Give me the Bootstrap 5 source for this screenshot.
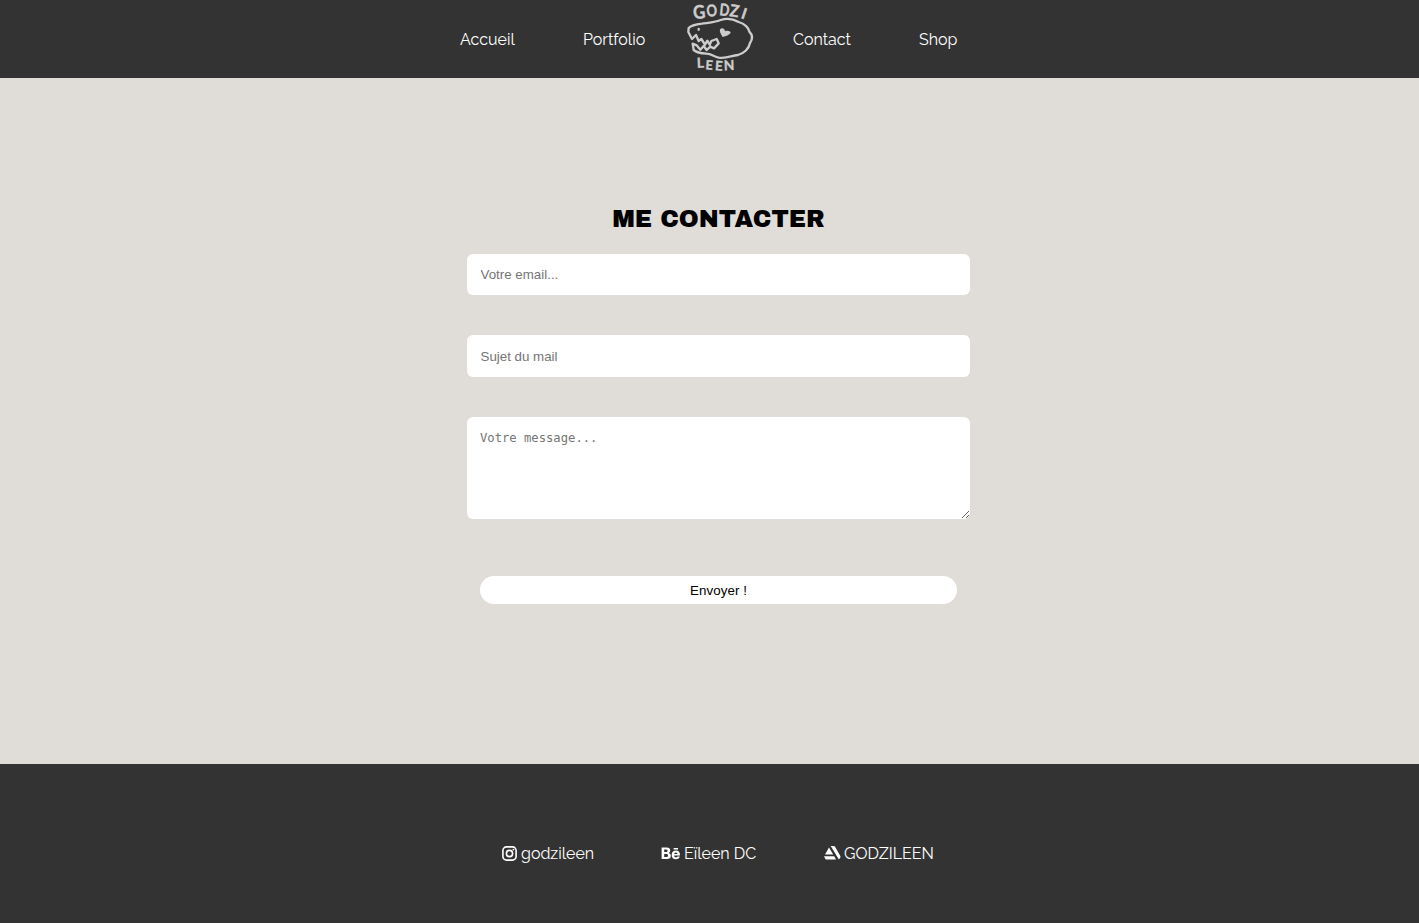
<!DOCTYPE html>
<html lang="fr">
<head>
<meta charset="utf-8">
<meta name="viewport" content="width=device-width, initial-scale=1">
<title>Godzileen - Contact</title>
<link href="https://cdn.jsdelivr.net/npm/bootstrap@5.3.0/dist/css/bootstrap.min.css" rel="stylesheet">
<style>
  body { background: #e0ddd8; font-family: Raleway, Lato, sans-serif; font-size: 16px; }
  .bar-dark { background: #333; }
  .site-header { height: 78px; }
  .site-header a, .site-footer a { color: #fff; text-decoration: none; white-space: nowrap; }
  .main-menu { width: 498px; margin-left: 460px; }
  .main-menu a { line-height: 24px; }
  .main-menu a:not(.logo-link) { padding-top: 2px; }
  .w-accueil { width: 55px; margin-right: 68px; }
  .w-portfolio { width: 62px; margin-right: 35px; }
  .w-contact { width: 58px; margin: 0 68px 0 33px; }
  .w-shop { width: 38px; }
  .logo-link { width: 80px; height: 78px; }
  .contact-area { height: 686px; padding: 124px 0 0 467px; }
  .contact-form { width: 503px; }
  .contact-title { font: 400 24px/34px "Archivo Black", Inter, sans-serif; color: #000; margin-bottom: 18px; }
  .contact-form .form-control { border: 0; border-radius: 6px; padding: 0 13px; color: #000; font: 13.33px "Liberation Sans", sans-serif; }
  .contact-form .form-control::placeholder { color: #757575; }
  .contact-form input.form-control { height: 41px; margin-bottom: 40px; padding-left: 13.5px; }
  .contact-form input.subject { height: 42px; }
  .contact-form textarea.form-control { height: 102px; min-height: 0; padding: 13px; font: 12.2px/16px "DejaVu Sans Mono", monospace; }
  .send { width: 477px; height: 28px; margin: 57px 13px 0; padding: 1px 0 0; border: 0; border-radius: 14px; background: #fff; color: #000; font: 13.33px/27px "Liberation Sans", sans-serif; letter-spacing: .1px; }
  .site-footer { height: 159px; padding: 77px 0 0 502px; }
  .site-footer a { line-height: 24px; height: 24px; }
  .site-footer span { padding-top: 2px; }
  .s-insta { width: 92px; margin-right: 67px; }
  .s-be { width: 96px; margin-right: 67px; }
  .s-art { width: 111px; }
</style>
</head>
<body>
<header class="site-header bar-dark">
  <nav class="main-menu d-flex align-items-center h-100">
    <a class="w-accueil" href="#">Accueil</a>
    <a class="w-portfolio" href="#">Portfolio</a>
    <a class="logo-link flex-shrink-0" href="#" aria-label="Godzileen">
      <svg class="d-block" width="80" height="80" viewBox="0 0 240 240" fill="none" stroke="#ccc" stroke-width="7" stroke-linecap="round" stroke-linejoin="round">
        <path d="M26 84C34 75 50 73 66 71C86 68 110 66 122 60C140 54 158 56 176 66C194 71 207 84 208 95C220 107 217 119 210 129C207 146 192 160 174 165C153 167 140 177 116 173C102 170 94 161 79 161C64 160 48 156 41 150L38 131L50 136L61 149L71 138L80 150L91 140L102 145L116 130L110 117L94 123L89 134L82 122L75 134L64 117L56 123L48 105L36 117L25 96Z"/>
        <path d="M56 87V89"/>
        <path d="M120 88C126 82 134 85 135 94C142 91 152 93 152 99C147 105 139 108 128 111C122 102 118 95 120 88Z" fill="#ccc" stroke="none"/>
        <g fill="#ccc" stroke-width="1.2" font-family="Lato, sans-serif" font-weight="700">
          <text font-size="56" transform="translate(41 58) rotate(-6) scale(.9 1)">G</text>
          <text font-size="49" transform="translate(81 50) rotate(-5) scale(.8 1)">O</text>
          <text font-size="50" transform="translate(117 46) rotate(6) scale(.78 1)">D</text>
          <text font-size="50" transform="translate(147 48) rotate(9) scale(.92 1)">Z</text>
          <text font-size="46" transform="translate(181 54) rotate(19)">I</text>
          <text font-size="41" transform="translate(51 203) rotate(-2)">L</text>
          <text font-size="38" transform="translate(76 208) rotate(4)">E</text>
          <text font-size="40" transform="translate(104 211) rotate(4)">E</text>
          <text font-size="41" transform="translate(132 211) rotate(-2)">N</text>
        </g>
      </svg>
    </a>
    <a class="w-contact" href="#">Contact</a>
    <a class="w-shop" href="#">Shop</a>
  </nav>
</header>

<main class="contact-area">
  <form class="contact-form">
    <h1 class="contact-title text-center">ME CONTACTER</h1>
    <input type="email" class="form-control" placeholder="Votre email...">
    <input type="text" class="form-control subject" placeholder="Sujet du mail">
    <textarea class="form-control" placeholder="Votre message..."></textarea>
    <button type="button" class="send d-block text-center">Envoyer !</button>
  </form>
</main>

<footer class="site-footer bar-dark d-flex">
  <a class="s-insta d-flex align-items-center" href="#">
    <svg class="me-1 flex-shrink-0" width="15" height="15" viewBox="0 0 15 15" fill="none" stroke="#fff" stroke-width="1.6"><rect x=".9" y=".9" width="13.2" height="13.2" rx="3.6"/><circle cx="7.5" cy="7.5" r="3.1"/><circle cx="11.4" cy="3.6" r=".9" fill="#fff" stroke="none"/></svg>
    <span>godzileen</span>
  </a>
  <a class="s-be d-flex align-items-center" href="#">
    <svg class="me-1 flex-shrink-0" width="19" height="14" viewBox="0 0 19 14" fill="#fff" aria-label="Behance"><path fill-rule="evenodd" d="M.6 1.5H5.8Q9.2 1.5 9.2 4.5Q9.2 6.3 7.7 7Q9.9 7.7 9.9 9.8Q9.9 13 6 13H.6ZM3.2 3.6V6.1H5.2Q6.6 6.1 6.6 4.8Q6.6 3.6 5.2 3.6ZM3.2 8V10.9H5.4Q7 10.9 7 9.4Q7 8 5.4 8Z"/><path fill-rule="evenodd" d="M19 9.5H13Q13.2 11.4 15 11.4Q16.2 11.4 16.5 10.6H18.8Q18 13.3 14.9 13.3Q10.7 13.3 10.7 9.1Q10.7 4.6 14.9 4.6Q19 4.6 19 9.5ZM13.1 8H16.6Q16.4 6.5 14.9 6.5Q13.3 6.5 13.1 8ZM12.6 2H17V3.5H12.6Z"/></svg>
    <span>Eïleen DC</span>
  </a>
  <a class="s-art d-flex align-items-center" href="#">
    <svg class="flex-shrink-0" width="17" height="14" viewBox="0 0 17 14" fill="#fff" style="margin-right:3px"><path d="M0 10.3H10.2L12 13.5H2.4Q1.5 13.5 1.1 12.6ZM5 1.5L9.2 8.5H1ZM6.7 0H9.6Q10.6 0 11.1.8L16.3 9.9Q16.8 10.8 16.2 11.7L14.9 13.5Z"/></svg>
    <span>GODZILEEN</span>
  </a>
</footer>
<script src="https://cdn.jsdelivr.net/npm/bootstrap@5.3.0/dist/js/bootstrap.bundle.min.js"></script>
</body>
</html>
